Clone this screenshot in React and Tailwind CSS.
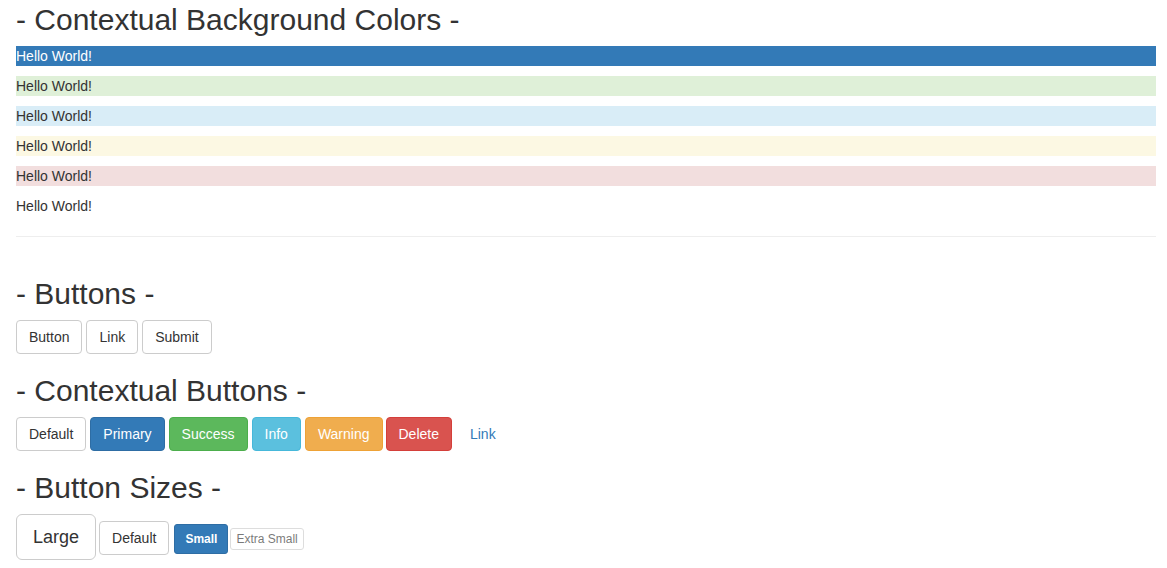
import React from 'react';

const rows = [
    'bg-[#337ab7] text-white',
    'bg-[#dff0d8]',
    'bg-[#d9edf7]',
    'bg-[#fcf8e3]',
    'bg-[#f2dede]',
    '',
];

const base = 'inline-block border rounded-[4px] text-[14px] leading-[20px] px-[12px] py-[6px]';

const Heading = ({ children, className = '' }) => (
    <h2 className={`text-[30px] leading-[33px] font-normal mb-[10px] ${className}`}>{children}</h2>
);

const App = () => {
    return (
        <div className="min-h-[568px] bg-white pl-4 pr-[11px] text-[#333] font-['Liberation_Sans',Arial,sans-serif]">
            <Heading className="pt-[3px]">- Contextual Background Colors -</Heading>
            {rows.map((cls, i) => (
                <p key={i} className={`text-[14px] leading-[20px] mb-[10px] ${cls}`}>Hello World!</p>
            ))}
            <hr className="mt-[20px] border-0 border-t border-[#eee]" />

            <Heading className="mt-[40px]">- Buttons -</Heading>
            <div className="flex items-baseline gap-[4px]">
                <button className={`${base} border-[#ccc] bg-white`}>Button</button>
                <a className={`${base} border-[#ccc] bg-white`}>Link</a>
                <button className={`${base} border-[#ccc] bg-white`}>Submit</button>
            </div>

            <Heading className="mt-[20px]">- Contextual Buttons -</Heading>
            <div className="flex items-baseline gap-[4px]">
                <button className={`${base} border-[#ccc] bg-white`}>Default</button>
                <button className={`${base} border-[#2e6da4] bg-[#337ab7] text-white`}>Primary</button>
                <button className={`${base} border-[#4cae4c] bg-[#5cb85c] text-white`}>Success</button>
                <button className={`${base} border-[#46b8da] bg-[#5bc0de] text-white`}>Info</button>
                <button className={`${base} border-[#eea236] bg-[#f0ad4e] text-white mr-[-1px]`}>Warning</button>
                <button className={`${base} border-[#d43f3a] bg-[#d9534f] text-white`}>Delete</button>
                <a className={`${base} border-transparent text-[#337ab7] ml-[1px]`}>Link</a>
            </div>

            <Heading className="mt-[20px]">- Button Sizes -</Heading>
            <div className="flex items-baseline">
                <button className="inline-block border border-[#ccc] bg-white rounded-[6px] text-[18px] leading-[24px] px-[16px] py-[10px]">Large</button>
                <button className={`${base} border-[#ccc] bg-white ml-[3px]`}>Default</button>
                <button className="inline-block border border-[#2e6da4] bg-[#337ab7] text-white font-bold rounded-[3px] text-[12px] leading-[18px] px-[10px] py-[5px] ml-[5px]">Small</button>
                <button className="inline-block border border-[#ccc] bg-white rounded-[3px] text-[12px] leading-[18px] px-[5px] py-[1px] ml-[2px] opacity-65">Extra Small</button>
            </div>
        </div>
    );
};

export default App;
